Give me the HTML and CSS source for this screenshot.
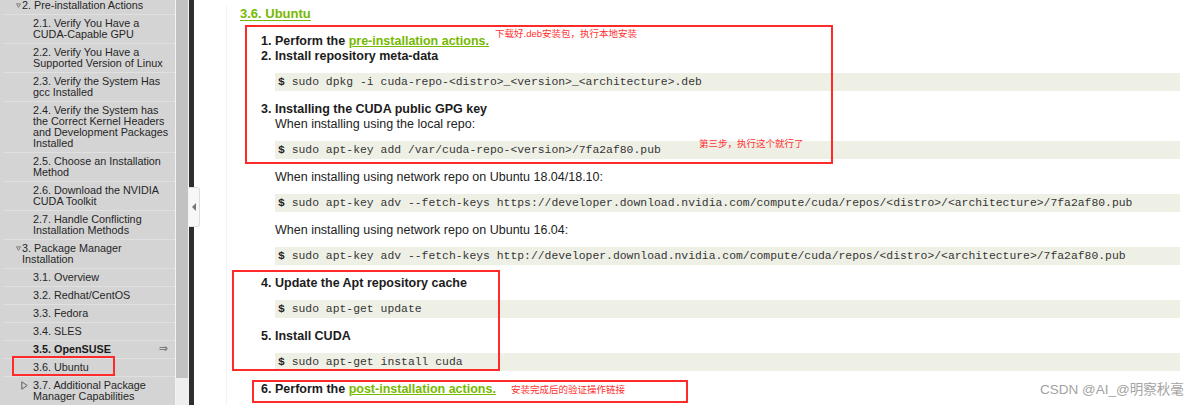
FILE: index.html
```html
<!DOCTYPE html>
<html lang="en">
<head>
<meta charset="utf-8">
<title>3.6. Ubuntu</title>
<link rel="stylesheet" href="styles.css">
</head>
<body>
<div class="page">
  <nav class="toc">
    <ul class="toc-list">
      <li class="toc-head"><svg class="twisty" width="5" height="5" viewBox="0 0 5 5"><polygon points="0.5,0.8 4.5,0.8 2.5,4.3" fill="none" stroke="#6a6a6a" stroke-width="0.8"/></svg>2. Pre-installation Actions</li>
      <li class="toc-sub">2.1. Verify You Have a<br>CUDA-Capable GPU</li>
      <li class="toc-sub">2.2. Verify You Have a<br>Supported Version of Linux</li>
      <li class="toc-sub">2.3. Verify the System Has<br>gcc Installed</li>
      <li class="toc-sub">2.4. Verify the System has<br>the Correct Kernel Headers<br>and Development Packages<br>Installed</li>
      <li class="toc-sub">2.5. Choose an Installation<br>Method</li>
      <li class="toc-sub">2.6. Download the NVIDIA<br>CUDA Toolkit</li>
      <li class="toc-sub">2.7. Handle Conflicting<br>Installation Methods</li>
      <li class="toc-head"><svg class="twisty" width="5" height="5" viewBox="0 0 5 5"><polygon points="0.5,0.8 4.5,0.8 2.5,4.3" fill="none" stroke="#6a6a6a" stroke-width="0.8"/></svg>3. Package Manager<br>Installation</li>
      <li class="toc-sub">3.1. Overview</li>
      <li class="toc-sub">3.2. Redhat/CentOS</li>
      <li class="toc-sub">3.3. Fedora</li>
      <li class="toc-sub">3.4. SLES</li>
      <li class="toc-sub toc-current">3.5. OpenSUSE<span class="toc-arrow">&#8658;</span></li>
      <li class="toc-sub">3.6. Ubuntu</li>
      <li class="toc-sub toc-closed"><svg class="twisty-r" width="7" height="9" viewBox="0 0 7 9"><polygon points="0.8,0.8 6.2,4.5 0.8,8.2" fill="none" stroke="#555" stroke-width="0.9"/></svg>3.7. Additional Package<br>Manager Capabilities</li>
    </ul>
  </nav>
  <div class="scrollbar"><div class="thumb"></div></div>
  <div class="divider"><div class="collapse-tab"><span class="tab-arrow"></span></div></div>
  <main class="main">
    <div class="content">
      <h2 class="title">3.6. Ubuntu</h2>
      <ol class="steps">
        <li><p>Perform the <a href="#">pre-installation actions.</a></p></li>
        <li>
          <p>Install repository meta-data</p>
          <pre><b>$</b> sudo dpkg -i cuda-repo-&lt;distro&gt;_&lt;version&gt;_&lt;architecture&gt;.deb</pre>
        </li>
        <li>
          <p>Installing the CUDA public GPG key</p>
          <p class="note">When installing using the local repo:</p>
          <pre><b>$</b> sudo apt-key add /var/cuda-repo-&lt;version&gt;/7fa2af80.pub</pre>
          <p class="note">When installing using network repo on Ubuntu 18.04/18.10:</p>
          <pre><b>$</b> sudo apt-key adv --fetch-keys https://developer.download.nvidia.com/compute/cuda/repos/&lt;distro&gt;/&lt;architecture&gt;/7fa2af80.pub</pre>
          <p class="note">When installing using network repo on Ubuntu 16.04:</p>
          <pre><b>$</b> sudo apt-key adv --fetch-keys http://developer.download.nvidia.com/compute/cuda/repos/&lt;distro&gt;/&lt;architecture&gt;/7fa2af80.pub</pre>
        </li>
        <li>
          <p>Update the Apt repository cache</p>
          <pre><b>$</b> sudo apt-get update</pre>
        </li>
        <li>
          <p>Install CUDA</p>
          <pre><b>$</b> sudo apt-get install cuda</pre>
        </li>
        <li><p>Perform the <a href="#">post-installation actions.</a></p></li>
      </ol>
    </div>
  </main>

  <div class="mark mark-toc"></div>
  <div class="mark mark-1"></div>
  <div class="mark mark-2"></div>
  <div class="mark mark-3"></div>
  <span class="note-red note-1">下载好.deb安装包，执行本地安装</span>
  <span class="note-red note-2">第三步，执行这个就行了</span>
  <span class="note-red note-3">安装完成后的验证操作链接</span>
  <span class="watermark">CSDN @AI_@明察秋毫</span>
</div>
</body>
</html>
```
FILE: styles.css
```css
html, body {
  margin: 0;
  padding: 0;
}
body {
  width: 1184px;
  height: 405px;
  overflow: hidden;
  background: #ffffff;
  font-family: "Liberation Sans", Arial, "Noto Sans CJK SC", sans-serif;
}
.page {
  position: relative;
  display: flex;
  height: 405px;
  overflow: hidden;
}

/* ---------- sidebar ---------- */
.toc {
  flex: none;
  width: 175px;
  background: #d4d4d4;
  border-right: 1px solid #f3f3f3;
  overflow: hidden;
}
.toc-list {
  list-style: none;
  margin: -3px 0 0 0;
  padding: 0;
  font-size: 10.8px;
  line-height: 11px;
  color: #262626;
}
.toc-list li {
  padding: 3px 4px 3px 30px;
  margin-left: 3px;
  border-bottom: 1px solid #e0e0e0;
  white-space: nowrap;
  position: relative;
}
.toc-list li.toc-head {
  padding-left: 19px;
}
.twisty {
  display: inline-block;
  margin-left: -6px;
  margin-right: 1px;
  vertical-align: 1px;
}
.twisty-r {
  display: inline-block;
  margin-left: -12px;
  margin-right: 5px;
  vertical-align: -1px;
}
.toc-current {
  font-weight: bold;
  color: #1a1a1a;
}
.toc-arrow {
  position: absolute;
  right: 7px;
  top: 2px;
  font-weight: normal;
  color: #6a6a6a;
  font-size: 11px;
  font-family: "DejaVu Sans", sans-serif;
}

.scrollbar {
  flex: none;
  width: 12px;
  background: #eeeeee;
  border-right: 1px solid #f3f3f3;
}
.thumb {
  height: 378px;
  background: #c2c2c2;
}

.divider {
  flex: none;
  width: 5px;
  background: #2e2e2e;
  position: relative;
}
.collapse-tab {
  position: absolute;
  left: 0;
  top: 187px;
  width: 10px;
  height: 38px;
  background: #f7f7f7;
  border: 1px solid #dddddd;
  border-left: none;
  border-radius: 0 3px 3px 0;
}
.tab-arrow {
  position: absolute;
  left: 3px;
  top: 15px;
  width: 0;
  height: 0;
  border-top: 4px solid transparent;
  border-bottom: 4px solid transparent;
  border-right: 4px solid #777777;
}

/* ---------- content ---------- */
.main {
  flex: 1;
  padding: 0 4px 0 32px;
  min-width: 0;
}
.content {
  margin-top: 5px;
  height: 400px;
  border-left: 1px solid #f2f2f2;
  padding-left: 13px;
}
.title {
  margin: 6px 0 0 0;
  font-size: 13px;
  line-height: 15px;
  font-weight: bold;
  color: #76b900;
  text-decoration: underline;
  text-underline-offset: 2px;
}
.steps {
  margin: 13px 0 0 0;
  padding-left: 35px;
  font-size: 12.5px;
  line-height: 15px;
  font-weight: bold;
  color: #1c1c1c;
}
.steps p {
  margin: 0;
}
.steps .note {
  font-weight: normal;
  color: #222;
}
.steps a {
  color: #76b900;
  text-decoration: underline;
}
.steps pre {
  margin: 9px 0 11px 0;
  padding: 0 0 0 3px;
  height: 18px;
  line-height: 18px;
  background: #eef0e6;
  font-family: "Liberation Mono", "DejaVu Sans Mono", monospace;
  font-size: 11.4px;
  font-weight: normal;
  color: #353535;
  white-space: pre;
  overflow: hidden;
}
.steps pre b {
  color: #222;
}

/* ---------- annotations ---------- */
.mark {
  position: absolute;
  border: 2px solid #ff2b2b;
  box-sizing: border-box;
}
.mark-toc { left: 12px; top: 356px; width: 103px; height: 20px; }
.mark-1 { left: 245px; top: 25px; width: 588px; height: 139px; }
.mark-2 { left: 232px; top: 270px; width: 268px; height: 101px; }
.mark-3 { left: 252px; top: 380px; width: 436px; height: 23px; }

.note-red {
  position: absolute;
  font-family: "Liberation Sans", "Noto Sans CJK SC", sans-serif;
  font-size: 9.5px;
  line-height: 12px;
  color: #ff3030;
  white-space: nowrap;
}
.note-1 { left: 495px; top: 28px; }
.note-2 { left: 699px; top: 138px; }
.note-3 { left: 511px; top: 384px; }

.watermark {
  position: absolute;
  left: 1040px;
  top: 382px;
  font-family: "Liberation Sans", "Noto Sans CJK SC", sans-serif;
  font-size: 13.5px;
  line-height: 16px;
  color: #a3a3a3;
  white-space: nowrap;
}
```
